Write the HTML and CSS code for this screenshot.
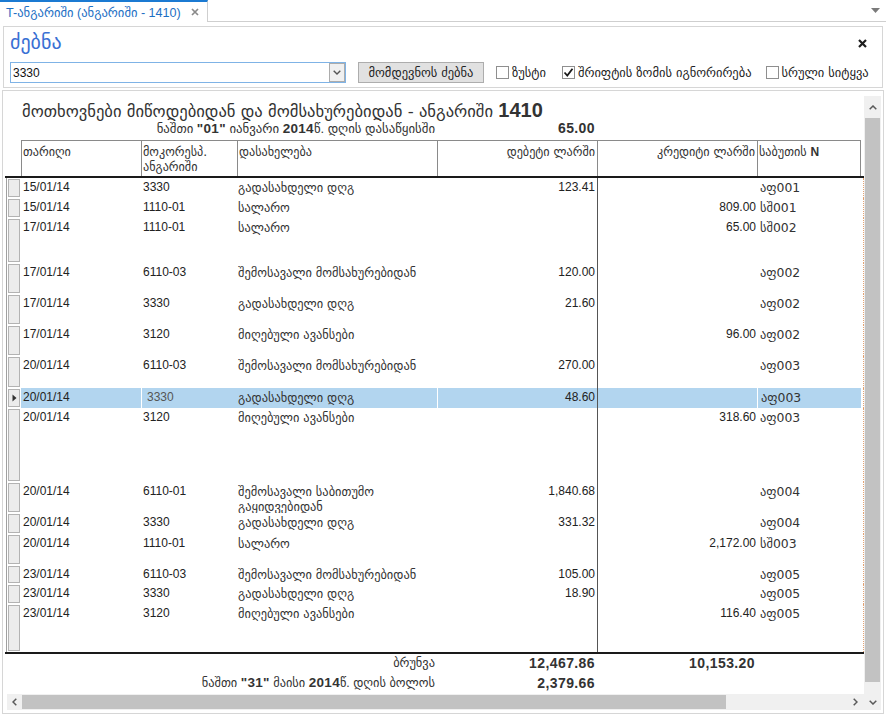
FILE: index.html
```html
<!DOCTYPE html>
<html lang="ka">
<head>
<meta charset="utf-8">
<title>T-ანგარიში</title>
<link rel="stylesheet" href="styles.css">
</head>
<body>
<div class="tabbar">
  <div class="tab">
    <span class="tab-title">T-ანგარიში (ანგარიში - 1410)</span>
    <svg class="tab-close" width="8" height="8" viewBox="0 0 8 8"><path d="M1 1L7 7M7 1L1 7" stroke="#8a8a8a" stroke-width="1.7"/></svg>
  </div>
  <div class="tab-fill">
    <svg width="9" height="5" viewBox="0 0 9 5"><path d="M0 0H9L4.5 5Z" fill="#7a7a7a"/></svg>
  </div>
</div>

<div class="search">
  <div class="search-head">
    <span class="search-title">ძებნა</span>
    <svg class="search-close" width="9" height="9" viewBox="0 0 9 9"><path d="M1 1L8 8M8 1L1 8" stroke="#1e1e1e" stroke-width="2.2"/></svg>
  </div>
  <div class="search-row">
    <div class="combo">
      <span class="combo-val">3330</span>
      <span class="combo-btn"><svg width="8" height="5" viewBox="0 0 8 5"><path d="M0.7 0.7L4 4L7.3 0.7" fill="none" stroke="#555" stroke-width="1.4"/></svg></span>
    </div>
    <button class="btn">მომდევნოს ძებნა</button>
    <label class="chk c1"><span class="box"></span><span>ზუსტი</span></label>
    <label class="chk c2"><span class="box"><svg width="11" height="11" viewBox="0 0 11 11"><path d="M1.5 5.5L4.3 8.5L9.5 1.8" fill="none" stroke="#1a1a1a" stroke-width="1.8"/></svg></span><span>შრიფტის ზომის იგნორირება</span></label>
    <label class="chk c3"><span class="box"></span><span>სრული სიტყვა</span></label>
  </div>
</div>

<div class="report">
  <div class="viewport">
    <div class="rtitle">მოთხოვნები მიწოდებიდან და მომსახურებიდან - ანგარიში <b>1410</b></div>
    <div class="g rsub">
      <div class="span-label">ნაშთი <b>"01"</b> იანვარი <b>2014</b>წ. დღის დასაწყისში</div>
      <div class="num"><b>65.00</b></div>
    </div>
    <div class="g thead">
      <div></div>
      <div class="th">თარიღი</div>
      <div class="th">მოკორესპ.<br>ანგარიში</div>
      <div class="th">დასახელება</div>
      <div class="th r">დებეტი ლარში</div>
      <div class="th r">კრედიტი ლარში</div>
      <div class="th last">საბუთის <b>N</b></div>
      <div></div>
    </div>
    <div class="tbody">
      <div class="g row h20"><div class="sel"><span class="sb"></span></div><div class="td">15/01/14</div><div class="td">3330</div><div class="td ka">გადასახდელი დღგ</div><div class="td r">123.41</div><div class="td cr"></div><div class="td ka doc">აფ001</div><div class="rest"></div></div>
      <div class="g row h20"><div class="sel"><span class="sb"></span></div><div class="td">15/01/14</div><div class="td">1110-01</div><div class="td ka">სალარო</div><div class="td r"></div><div class="td cr">809.00</div><div class="td ka doc">სშ001</div><div class="rest"></div></div>
      <div class="g row h45"><div class="sel"><span class="sb"></span></div><div class="td">17/01/14</div><div class="td">1110-01</div><div class="td ka">სალარო</div><div class="td r"></div><div class="td cr">65.00</div><div class="td ka doc">სშ002</div><div class="rest"></div></div>
      <div class="g row h31"><div class="sel"><span class="sb"></span></div><div class="td">17/01/14</div><div class="td">6110-03</div><div class="td ka">შემოსავალი მომსახურებიდან</div><div class="td r">120.00</div><div class="td cr"></div><div class="td ka doc">აფ002</div><div class="rest"></div></div>
      <div class="g row h31"><div class="sel"><span class="sb"></span></div><div class="td">17/01/14</div><div class="td">3330</div><div class="td ka">გადასახდელი დღგ</div><div class="td r">21.60</div><div class="td cr"></div><div class="td ka doc">აფ002</div><div class="rest"></div></div>
      <div class="g row h31"><div class="sel"><span class="sb"></span></div><div class="td">17/01/14</div><div class="td">3120</div><div class="td ka">მიღებული ავანსები</div><div class="td r"></div><div class="td cr">96.00</div><div class="td ka doc">აფ002</div><div class="rest"></div></div>
      <div class="g row h32"><div class="sel"><span class="sb"></span></div><div class="td">20/01/14</div><div class="td">6110-03</div><div class="td ka">შემოსავალი მომსახურებიდან</div><div class="td r">270.00</div><div class="td cr"></div><div class="td ka doc">აფ003</div><div class="rest"></div></div>
      <div class="g row h20 selected"><div class="sel"><span class="sb"><svg width="5" height="8" viewBox="0 0 5 8"><path d="M0.5 0.5L4.5 4L0.5 7.5Z" fill="#333"/></svg></span></div><div class="td">20/01/14</div><div class="td gap dim">3330</div><div class="td ka">გადასახდელი დღგ</div><div class="td r gap">48.60</div><div class="td cr"></div><div class="td ka doc gap">აფ003</div><div class="rest"></div></div>
      <div class="g row h74"><div class="sel"><span class="sb"></span></div><div class="td">20/01/14</div><div class="td">3120</div><div class="td ka">მიღებული ავანსები</div><div class="td r"></div><div class="td cr">318.60</div><div class="td ka doc">აფ003</div><div class="rest"></div></div>
      <div class="g row h31"><div class="sel"><span class="sb"></span></div><div class="td">20/01/14</div><div class="td">6110-01</div><div class="td ka">შემოსავალი საბითუმო<br>გაყიდვებიდან</div><div class="td r">1,840.68</div><div class="td cr"></div><div class="td ka doc">აფ004</div><div class="rest"></div></div>
      <div class="g row h21"><div class="sel"><span class="sb"></span></div><div class="td">20/01/14</div><div class="td">3330</div><div class="td ka">გადასახდელი დღგ</div><div class="td r">331.32</div><div class="td cr"></div><div class="td ka doc">აფ004</div><div class="rest"></div></div>
      <div class="g row h31"><div class="sel"><span class="sb"></span></div><div class="td">20/01/14</div><div class="td">1110-01</div><div class="td ka">სალარო</div><div class="td r"></div><div class="td cr">2,172.00</div><div class="td ka doc">სშ003</div><div class="rest"></div></div>
      <div class="g row h19"><div class="sel"><span class="sb"></span></div><div class="td">23/01/14</div><div class="td">6110-03</div><div class="td ka">შემოსავალი მომსახურებიდან</div><div class="td r">105.00</div><div class="td cr"></div><div class="td ka doc">აფ005</div><div class="rest"></div></div>
      <div class="g row h20"><div class="sel"><span class="sb"></span></div><div class="td">23/01/14</div><div class="td">3330</div><div class="td ka">გადასახდელი დღგ</div><div class="td r">18.90</div><div class="td cr"></div><div class="td ka doc">აფ005</div><div class="rest"></div></div>
      <div class="g row h48"><div class="sel"><span class="sb"></span></div><div class="td">23/01/14</div><div class="td">3120</div><div class="td ka">მიღებული ავანსები</div><div class="td r"></div><div class="td cr">116.40</div><div class="td ka doc">აფ005</div><div class="rest"></div></div>
    </div>
    <div class="tfoot">
      <div class="g frow f1">
        <div class="span-label foot">ბრუნვა</div>
        <div class="num"><b>12,467.86</b></div>
        <div class="num cnum"><b>10,153.20</b></div>
      </div>
      <div class="g frow">
        <div class="span-label foot">ნაშთი <b>"31"</b> მაისი <b>2014</b>წ. დღის ბოლოს</div>
        <div class="num"><b>2,379.66</b></div>
      </div>
    </div>
  </div>

  <div class="vscroll">
    <div class="arrow-up"><svg width="8" height="5" viewBox="0 0 8 5"><path d="M0.7 4.3L4 1L7.3 4.3" fill="none" stroke="#5a5a5a" stroke-width="1.5"/></svg></div>
    <div class="vthumb"></div>
    <div class="vrest"></div>
    <div class="arrow-down"><svg width="8" height="5" viewBox="0 0 8 5"><path d="M0.7 0.7L4 4L7.3 0.7" fill="none" stroke="#5a5a5a" stroke-width="1.5"/></svg></div>
  </div>

  <div class="hscroll">
    <div class="arrow-left"><svg width="5" height="8" viewBox="0 0 5 8"><path d="M4.3 0.7L1 4L4.3 7.3" fill="none" stroke="#5a5a5a" stroke-width="1.5"/></svg></div>
    <div class="hthumb"></div>
    <div class="hrest"></div>
    <div class="arrow-right"><svg width="5" height="8" viewBox="0 0 5 8"><path d="M0.7 0.7L4 4L0.7 7.3" fill="none" stroke="#5a5a5a" stroke-width="1.5"/></svg></div>
  </div>
</div>
</body>
</html>
```

FILE: styles.css
```css
* { box-sizing: border-box; }
html, body { margin: 0; padding: 0; }
body {
  width: 886px;
  height: 716px;
  overflow: hidden;
  background: #fff;
  font-family: "Liberation Sans", "DejaVu Sans", sans-serif;
  font-size: 12px;
  color: #1e1e1e;
}

/* tab bar */
.tabbar { display: flex; height: 22px; }
.tab {
  flex: 0 0 auto;
  border-top: 2px solid #1b7ad2;
  border-right: 1px solid #cfcfcf;
  display: flex;
  align-items: center;
  padding: 0 8px 0 6px;
  gap: 10px;
}
.tab-title { color: #1d6fc4; font-size: 12.6px; white-space: nowrap; }
.tab-close { flex: 0 0 8px; }
.tab-fill {
  flex: 1;
  border-bottom: 1px solid #cfcfcf;
  display: flex;
  justify-content: flex-end;
  align-items: center;
  padding-right: 6px;
}

/* search panel */
.search {
  margin: 4px 3px 0;
  height: 62px;
  border: 1px solid #d6d6d6;
  padding: 0 0 0 6px;
}
.search-head {
  height: 35px;
  display: flex;
  align-items: flex-start;
  justify-content: space-between;
  padding: 3px 15px 0 0;
}
.search-title { font-size: 20px; line-height: 24px; color: #3a70d4; font-family: "DejaVu Sans", sans-serif; }
.search-close { margin-top: 9px; }
.search-row { display: flex; align-items: center; height: 21px; }
.combo {
  width: 336px;
  height: 21px;
  border: 1px solid #7fb3e6;
  display: flex;
  align-items: center;
  justify-content: space-between;
  padding-left: 2px;
}
.combo-val { font-size: 12px; color: #111; }
.combo-btn {
  width: 16px;
  height: 19px;
  border: 1px solid #acacac;
  background: #f0f0f0;
  display: flex;
  align-items: center;
  justify-content: center;
}
.btn {
  margin-left: 12px;
  width: 126px;
  height: 21px;
  border: 1px solid #adadad;
  background: #e1e1e1;
  font-family: "DejaVu Sans", sans-serif;
  font-size: 12.5px;
  color: #222;
  padding: 0;
}
.chk {
  display: flex;
  align-items: center;
  gap: 3px;
  font-family: "DejaVu Sans", sans-serif;
  font-size: 12.5px;
  color: #222;
  white-space: nowrap;
}
.chk.c1 { margin-left: 12px; }
.chk.c2 { margin-left: 16px; }
.chk.c3 { margin-left: 14px; }
.box {
  width: 13px;
  height: 13px;
  border: 1px solid #8f8f8f;
  background: #fff;
  display: flex;
  align-items: center;
  justify-content: center;
}

/* report */
.report {
  margin: 2px 2px 0;
  height: 624px;
  border: 1px solid #d6d6d6;
  padding: 5px 2px 3px 2px;
  display: grid;
  grid-template-columns: 859px 17px;
  grid-template-rows: 598px 16px;
}
.viewport { overflow: hidden; grid-column: 1; grid-row: 1; color: #222; }
.rtitle {
  padding: 3px 0 0 17px;
  height: 25px;
  line-height: 22px;
  font-family: "DejaVu Sans", sans-serif;
  font-size: 16.6px;
  color: #333;
  white-space: nowrap;
}
.rtitle b { font-family: "Liberation Sans", sans-serif; font-size: 20px; }
.g {
  display: grid;
  grid-template-columns: 16px 120px 96px 200px 160px 160px 104px 3px;
}
.rsub { height: 15px; line-height: 15px; margin-bottom: 4px; white-space: nowrap; }
.span-label {
  grid-column: 1 / 5;
  text-align: right;
  padding-right: 2px;
  font-family: "Liberation Sans", "DejaVu Sans", sans-serif;
  font-size: 12.8px;
  color: #333;
}
.span-label.foot { font-size: 12.4px; }
.span-label b { font-size: 13.5px; letter-spacing: 0.3px; }
.num { text-align: right; padding-right: 2px; color: #333; font-size: 14px; letter-spacing: 0.4px; }

.thead { height: 38px; border-bottom: 2px solid #1a1a1a; }
.th {
  border-top: 1px solid #8a8a8a;
  border-left: 1px solid #8a8a8a;
  padding: 4px 2px 0 1px;
  line-height: 15px;
  font-family: "DejaVu Sans", sans-serif;
  font-size: 12.2px;
  color: #333;
  white-space: nowrap;
}
.th b { font-family: "Liberation Sans", sans-serif; font-size: 12px; }
.th.r { text-align: right; }
.th.last { border-right: 1px solid #8a8a8a; }

.row { white-space: nowrap; }
.h19 { height: 19px; } .h20 { height: 20px; } .h21 { height: 21px; }
.h31 { height: 31px; } .h32 { height: 32px; } .h45 { height: 45px; }
.h48 { height: 48px; } .h74 { height: 74px; }
.sel {
  margin-left: 1px;
  border-left: 1px solid #a0a0a0;
  padding: 1px;
  display: flex;
}
.sb {
  flex: 1;
  background: #ececec;
  border: 1px solid #b3b3b3;
  display: flex;
  align-items: center;
  justify-content: center;
}
.td { padding: 2px 2px 0; line-height: 15px; overflow: hidden; }
.td.ka { font-family: "DejaVu Sans", sans-serif; font-size: 12.4px; padding-left: 1px; color: #333; }
.td.doc { padding-left: 3px; }
.td.r { text-align: right; }
.td.cr { text-align: right; border-left: 1px solid #555; padding-right: 1px; }
.rest { border-right: 1px dotted #e2a273; }

.selected .td { background: #b2d5ef; }
.selected .td.gap { border-left: 1px solid #fff; }
.selected .td.dim { color: #555; padding-left: 5px; }

.tfoot { border-top: 2px solid #1a1a1a; }
.frow { height: 20px; line-height: 20px; white-space: nowrap; }
.frow.f1 { height: 19px; line-height: 19px; }

/* scrollbars */
.vscroll {
  grid-column: 2;
  grid-row: 1 / 3;
  background: #f0f0f0;
  display: flex;
  flex-direction: column;
}
.arrow-up { height: 22px; display: flex; align-items: center; justify-content: center; }
.vthumb { height: 564px; margin: 0 1px; background: #c2c2c2; }
.vrest { height: 12px; }
.arrow-down { height: 16px; display: flex; align-items: center; justify-content: center; }
.hscroll {
  grid-column: 1;
  grid-row: 2;
  background: #f0f0f0;
  display: flex;
  align-items: stretch;
  margin-left: 2px;
}
.arrow-left { width: 15px; display: flex; align-items: center; justify-content: center; }
.hthumb { width: 704px; margin: 1px 0; background: #c2c2c2; }
.hrest { flex: 1; }
.arrow-right { width: 17px; display: flex; align-items: center; justify-content: center; }
```
